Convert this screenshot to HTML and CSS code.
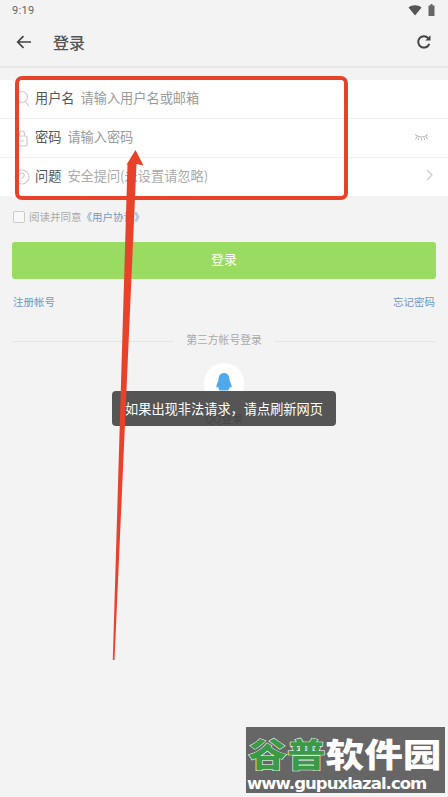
FILE: index.html
```html
<!DOCTYPE html>
<html lang="zh">
<head>
<meta charset="utf-8">
<title>登录</title>
<link rel="stylesheet" href="styles.css">
</head>
<body>
<div class="page">
  <div class="status">
    <span class="time">9:19</span>
    <span class="status-icons">
      <svg width="14" height="11" viewBox="0 0 14 11"><path d="M0.5 2.5C4 -0.4 10 -0.4 13.500 2.500L7 10.500Z" fill="#555"/></svg>
      <svg width="7" height="12" viewBox="0 0 7 12"><path d="M2.500 0H4.500V1.500H6.500V12H0.500V1.500H2.500Z" fill="#666"/></svg>
    </span>
  </div>
  <header class="bar">
    <svg class="back" width="16" height="14" viewBox="0 0 16 14"><path d="M15 7H2M7.500 1.200L1.700 7L7.500 12.800" fill="none" stroke="#444" stroke-width="1.700"/></svg>
    <h1 class="title">登录</h1>
    <svg class="refresh" width="16" height="16" viewBox="0 0 16 16"><path d="M13.300 9.800A5.700 5.700 0 1 1 12.300 4.200" fill="none" stroke="#444" stroke-width="2"/><path d="M14.500 1.300V6.500H9.300Z" fill="#444"/></svg>
  </header>

  <section class="form">
    <div class="row">
      <svg class="row-icon" width="16" height="18" viewBox="0 0 16 18"><circle cx="8" cy="7" r="5.500" fill="none" stroke="#ccc" stroke-width="1.200"/><path d="M11.500 11.500L15 16.500" stroke="#ccc" stroke-width="1.200"/></svg>
      <span class="label">用户名</span><span class="hint">请输入用户名或邮箱</span>
    </div>
    <div class="row">
      <svg class="row-icon" width="16" height="18" viewBox="0 0 16 18"><rect x="3" y="7" width="10" height="10" rx="1.500" fill="none" stroke="#ccc" stroke-width="1.200"/><path d="M5.500 7V4.500a2.500 2.500 0 0 1 5 0V7M6 12H10" fill="none" stroke="#ccc" stroke-width="1.200"/></svg>
      <span class="label">密码</span><span class="hint">请输入密码</span>
      <svg class="row-end eye" width="15" height="8" viewBox="0 0 15 8"><path d="M1 1.500Q7.500 6.500 14 1.500M3 3.500L1.500 6.500M7.500 5V7.500M12 3.500L13.500 6.500M5 4.500L4.200 7M10 4.500L10.800 7" fill="none" stroke="#aaa" stroke-width="0.900"/></svg>
    </div>
    <div class="row">
      <svg class="row-icon" width="16" height="18" viewBox="0 0 16 18"><circle cx="8" cy="9" r="7" fill="none" stroke="#ccc" stroke-width="1.200"/><path d="M5.800 7.200a2.200 2.200 0 1 1 3.400 1.800C8.400 9.600 8 10 8 11M8 12.500V13.500" fill="none" stroke="#ccc" stroke-width="1.200"/></svg>
      <span class="label">问题</span><span class="hint hint-light">安全提问(未设置请忽略)</span>
      <svg class="row-end chevron" width="7" height="12" viewBox="0 0 7 12"><path d="M1 1L6 6L1 11" fill="none" stroke="#ccc" stroke-width="1.200"/></svg>
    </div>
  </section>

  <label class="agree">
    <span class="check"></span>
    <span class="agree-text">阅读并同意</span><span class="link">《用户协议》</span>
  </label>

  <button class="submit"><span class="submit-text">登录</span></button>

  <div class="links">
    <span class="link">注册帐号</span>
    <span class="link">忘记密码</span>
  </div>

  <div class="divider"><span class="divider-text">第三方帐号登录</span></div>

  <div class="social">
    <span class="qq-circle">
      <svg width="18" height="20" viewBox="0 0 18 20"><path d="M9 0C12.800 0 14.500 3 14.500 6.500C14.500 8 16 10 16.500 12.500C17 15 15.800 15 14.800 13.800C14.500 16 13.500 17 13 17.500L4.800 17.500C4.300 17 3.500 16 3.200 13.800C2.200 15 1 15 1.500 12.500C2 10 3.500 8 3.500 6.500C3.500 3 5.200 0 9 0Z" fill="#4fa9ea"/></svg>
    </span>
    <span class="qq-label">QQ登录</span>
  </div>

  <div class="toast">如果出现非法请求，请点刷新网页</div>

  <div class="callout"></div>
  <svg class="arrow" width="448" height="797" viewBox="0 0 448 797"><path d="M135.500 150L143.500 165.500L136.500 164L114.500 660H112.800L127.500 164L126 165.500Z" fill="#e8432a"/></svg>

  <div class="mark">
    <div class="mark-top"><span class="mark-green">谷普</span><span class="mark-white">软件园</span></div>
    <div class="mark-url">www.gupuxlazal.com</div>
  </div>
</div>
</body>
</html>
```
FILE: styles.css
```css
* { box-sizing: border-box; }
html, body { margin: 0; padding: 0; }
body { font-family: "Noto Sans CJK SC", "Noto Sans", sans-serif; }
.page {
  position: relative;
  width: 448px;
  height: 797px;
  overflow: hidden;
  background: #f3f3f3;
}
.status {
  height: 20px;
  padding: 0 12px;
  display: flex;
  align-items: center;
  justify-content: space-between;
  color: #666;
  font: 11px Roboto, sans-serif;
  letter-spacing: 0.3px;
}
.status-icons { display: flex; align-items: center; gap: 6px; margin-right: 1px; }
.bar {
  height: 48px;
  display: flex;
  align-items: center;
  padding: 0 16px 2px;
  background: #f3f3f3;
  border-bottom: 2px solid #e8e8e8;
}
.back { margin-right: 21px; }
.title { margin: 0; font-size: 16px; font-weight: 500; color: #555; flex: 1; line-height: 1; }
.form {
  margin-top: 12px;
  background: #fff;
}
.row {
  height: 39px;
  display: flex;
  align-items: center;
  padding: 0 12px 4px 14px;
  border-bottom: 1px solid #f1f1f1;
  font-size: 13.200px;
}
.row:last-child { border-bottom: 0; height: 38px; }
.row-icon { margin-right: 5px; margin-top: 3px; flex: none; }
.label { color: #555; margin-right: 6px; }
.hint { color: #999; }
.hint-light { color: #aaa; }
.row-end { margin-left: auto; margin-right: 5px; }
.eye { margin-right: 7px; margin-top: 2px; }
.chevron { margin-right: 3px; }
.agree {
  display: flex;
  align-items: center;
  margin-top: 13px;
  padding-left: 13px;
  height: 14px;
  font-size: 10.500px;
}
.check {
  width: 12px;
  height: 12px;
  margin-top: 2px;
  margin-right: 4px;
  background: #f8f8f8;
  border: 1px solid #ccc;
  border-radius: 2px;
}
.agree-text { color: #aaa; }
.link { color: #6f97c6; font-size: 10.500px; }
.submit {
  display: block;
  width: 424px;
  height: 37px;
  margin: 19px 12px 0;
  padding: 0 0 4px;
  border: 0;
  border-radius: 3px;
  background: #9adc61;
  color: #fff;
  font: 13px "Noto Sans CJK SC", sans-serif;
}
.links {
  display: flex;
  justify-content: space-between;
  margin: 15px 13px 0;
  height: 16px;
  line-height: 16px;
}
.divider {
  position: relative;
  margin: 21px 12px 0;
  height: 16px;
  display: flex;
  align-items: center;
  justify-content: center;
}
.divider::before {
  content: "";
  position: absolute;
  left: 0;
  right: 0;
  top: 10px;
  height: 1px;
  background: #e4e4e4;
}
.divider-text {
  position: relative;
  padding: 0 12px;
  background: #f3f3f3;
  color: #aaa;
  font-size: 10.800px;
}
.social {
  display: flex;
  flex-direction: column;
  align-items: center;
  margin-top: 16px;
}
.qq-circle {
  width: 40px;
  height: 40px;
  border-radius: 50%;
  background: #fff;
  display: flex;
  align-items: center;
  justify-content: center;
}
.qq-label { margin-top: 8px; font-size: 10.800px; line-height: 14px; color: #555; }
.toast {
  position: absolute;
  left: 112px;
  top: 391px;
  width: 224px;
  height: 35px;
  border-radius: 4px;
  background: rgba(68, 68, 68, 0.9);
  color: #fff;
  font-size: 13.200px;
  line-height: 35px;
  text-align: center;
  white-space: nowrap;
}
.callout {
  position: absolute;
  left: 15px;
  top: 76px;
  width: 333px;
  height: 124px;
  border: 4px solid #e8432a;
  border-radius: 7px;
}
.arrow { position: absolute; left: 0; top: 0; }
.mark {
  position: absolute;
  left: 246px;
  top: 727px;
  width: 199px;
  height: 66px;
  background: #666;
  overflow: hidden;
}
.mark-top {
  display: flex;
  height: 47px;
  padding: 5px 0 0 2px;
  align-items: center;
  font-size: 33px;
  line-height: 36px;
  font-weight: 900;
  transform: scaleX(1.170);
  transform-origin: left center;
}
.mark-green { color: #3a9a45; -webkit-text-stroke: 1px #fff; paint-order: stroke fill; }
.mark-white { color: #fff; }
.mark-url {
  color: #fff;
  font: bold 16.500px/19px "DejaVu Sans", sans-serif;
  white-space: nowrap;
  letter-spacing: -0.950px;
  padding-left: 1px;
}
```
